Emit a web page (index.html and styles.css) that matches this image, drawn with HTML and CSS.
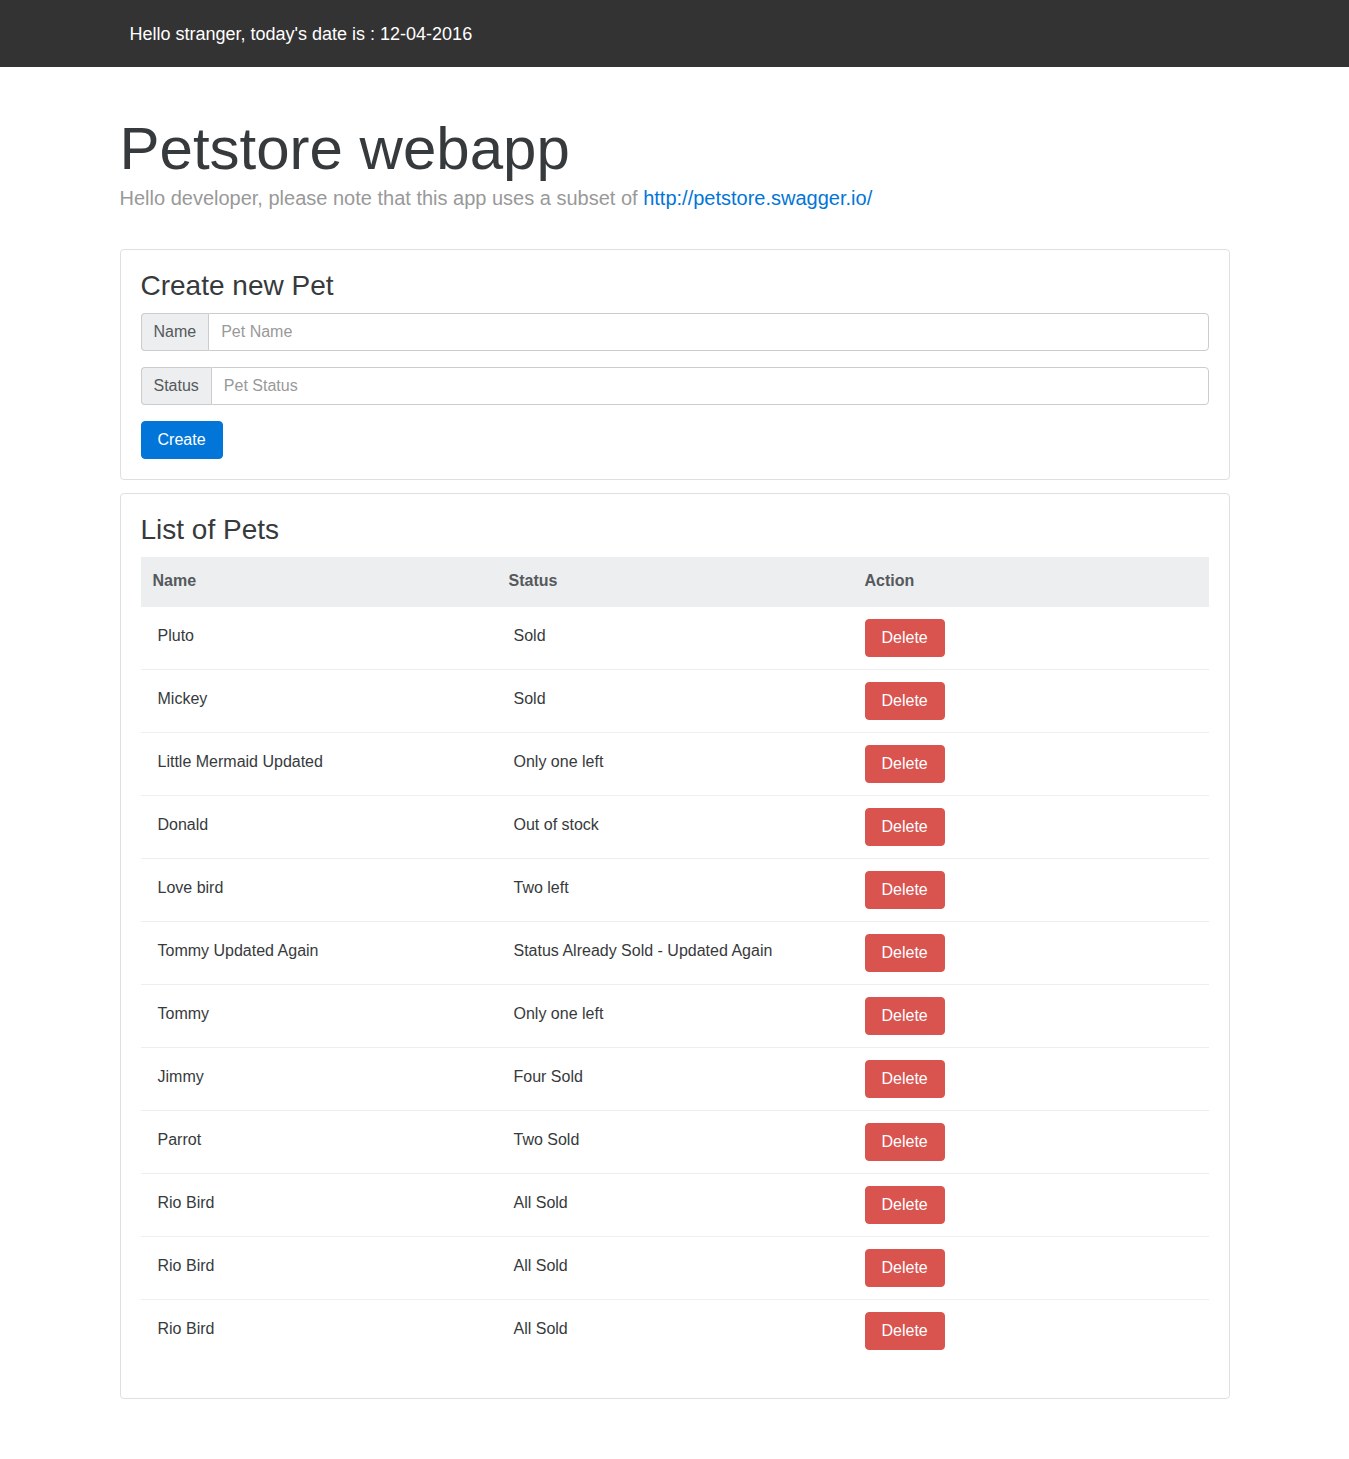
FILE: index.html
```html
<!DOCTYPE html>
<html lang="en">
<head>
<meta charset="utf-8">
<title>Petstore webapp</title>
<link rel="stylesheet" href="styles.css">
</head>
<body>
<nav class="navbar">
  <div class="container">
    <span class="navbar-brand">Hello stranger, today's date is : 12-04-2016</span>
  </div>
</nav>

<main class="container">
  <header class="page-header">
    <h1 class="page-title">Petstore webapp</h1>
    <p class="lead">Hello developer, please note that this app uses a subset of <a href="#">http://petstore.swagger.io/</a></p>
  </header>

  <section class="card">
    <h3 class="card-title">Create new Pet</h3>
    <form class="create-form">
      <div class="form-group">
        <div class="input-group">
          <span class="input-addon">Name</span>
          <input class="form-control" type="text" placeholder="Pet Name">
        </div>
      </div>
      <div class="form-group">
        <div class="input-group">
          <span class="input-addon">Status</span>
          <input class="form-control" type="text" placeholder="Pet Status">
        </div>
      </div>
      <button type="button" class="btn btn-primary">Create</button>
    </form>
  </section>

  <section class="card">
    <h3 class="card-title">List of Pets</h3>
    <table class="table">
      <thead>
        <tr><th>Name</th><th>Status</th><th>Action</th></tr>
      </thead>
      <tbody>
        <tr><td class="txt">Pluto</td><td class="txt">Sold</td><td><button class="btn btn-danger">Delete</button></td></tr>
        <tr><td class="txt">Mickey</td><td class="txt">Sold</td><td><button class="btn btn-danger">Delete</button></td></tr>
        <tr><td class="txt">Little Mermaid Updated</td><td class="txt">Only one left</td><td><button class="btn btn-danger">Delete</button></td></tr>
        <tr><td class="txt">Donald</td><td class="txt">Out of stock</td><td><button class="btn btn-danger">Delete</button></td></tr>
        <tr><td class="txt">Love bird</td><td class="txt">Two left</td><td><button class="btn btn-danger">Delete</button></td></tr>
        <tr><td class="txt">Tommy Updated Again</td><td class="txt">Status Already Sold - Updated Again</td><td><button class="btn btn-danger">Delete</button></td></tr>
        <tr><td class="txt">Tommy</td><td class="txt">Only one left</td><td><button class="btn btn-danger">Delete</button></td></tr>
        <tr><td class="txt">Jimmy</td><td class="txt">Four Sold</td><td><button class="btn btn-danger">Delete</button></td></tr>
        <tr><td class="txt">Parrot</td><td class="txt">Two Sold</td><td><button class="btn btn-danger">Delete</button></td></tr>
        <tr><td class="txt">Rio Bird</td><td class="txt">All Sold</td><td><button class="btn btn-danger">Delete</button></td></tr>
        <tr><td class="txt">Rio Bird</td><td class="txt">All Sold</td><td><button class="btn btn-danger">Delete</button></td></tr>
        <tr><td class="txt">Rio Bird</td><td class="txt">All Sold</td><td><button class="btn btn-danger">Delete</button></td></tr>
      </tbody>
    </table>
  </section>
</main>
</body>
</html>
```

FILE: styles.css
```css
* {
  box-sizing: border-box;
}

html, body {
  margin: 0;
  padding: 0;
}

body {
  font-family: "Liberation Sans", Arial, Helvetica, sans-serif;
  font-size: 16px;
  line-height: 1.5;
  color: #373a3c;
  background: #fff;
}

.container {
  width: 1140px;
  margin: 0 auto;
  padding: 0 15px;
}

/* Navbar */
.navbar {
  background: #333333;
  height: 67px;
  display: flex;
  align-items: center;
}

.navbar-brand {
  display: inline-block;
  padding-left: 10px;
  padding-top: 2px;
  font-size: 18px;
  line-height: 25px;
  color: #fff;
}

/* Header */
.page-header {
  padding-top: 49px;
  padding-bottom: 36px;
}

.page-title {
  margin: 0;
  font-size: 60px;
  font-weight: 300;
  line-height: 66px;
  color: #373a3c;
}

.lead {
  margin: 1px 0 0;
  font-size: 20px;
  line-height: 30px;
  color: #999;
}

.lead a {
  color: #0275d8;
  text-decoration: none;
}

/* Cards */
.card {
  border: 1px solid rgba(0, 0, 0, 0.125);
  border-radius: 4px;
  padding: 20px;
  margin-bottom: 13px;
}

.card-title {
  margin: 0 0 11px;
  padding-top: 1px;
  font-size: 28px;
  font-weight: 500;
  line-height: 1.1;
  color: #373a3c;
}

/* Form */
.create-form {
  margin: 0;
}

.form-group {
  margin-bottom: 16px;
}

.input-group {
  display: flex;
  width: 100%;
}

.input-addon {
  padding: 8px 12px;
  font-size: 16px;
  line-height: 20px;
  color: #55595c;
  background: #eceeef;
  border: 1px solid #cccccc;
  border-right: 0;
  border-radius: 4px 0 0 4px;
  white-space: nowrap;
}

.form-control {
  flex: 1;
  display: block;
  padding: 8px 12px;
  font-family: inherit;
  font-size: 16px;
  line-height: 20px;
  height: 38px;
  color: #55595c;
  background: #fff;
  border: 1px solid #cccccc;
  border-radius: 0 4px 4px 0;
  outline: none;
}

.form-control::placeholder {
  color: #999;
  opacity: 1;
}

/* Buttons */
.btn {
  display: inline-block;
  padding: 8px 16px;
  font-family: inherit;
  font-size: 16px;
  line-height: 20px;
  font-weight: 400;
  border: 1px solid transparent;
  border-radius: 4px;
  color: #fff;
  cursor: pointer;
  vertical-align: middle;
}

.btn-primary {
  background: #0275d8;
  border-color: #0275d8;
}

.btn-danger {
  background: #d9534f;
  border-color: #d9534f;
}

/* Table */
.table {
  width: 100%;
  border-collapse: collapse;
  margin-bottom: 16px;
}

.table th {
  width: 33.333%;
  padding: 12px;
  text-align: left;
  font-weight: 700;
  line-height: 24px;
  color: #55595c;
  background: #eceeef;
  border-bottom: 2px solid #eceeef;
  vertical-align: bottom;
}

.table td {
  padding: 12px;
  line-height: 24px;
  vertical-align: top;
  border-top: 1px solid #eceeef;
}

.table td.txt {
  padding: 17px 12px 11px 17px;
}
```
